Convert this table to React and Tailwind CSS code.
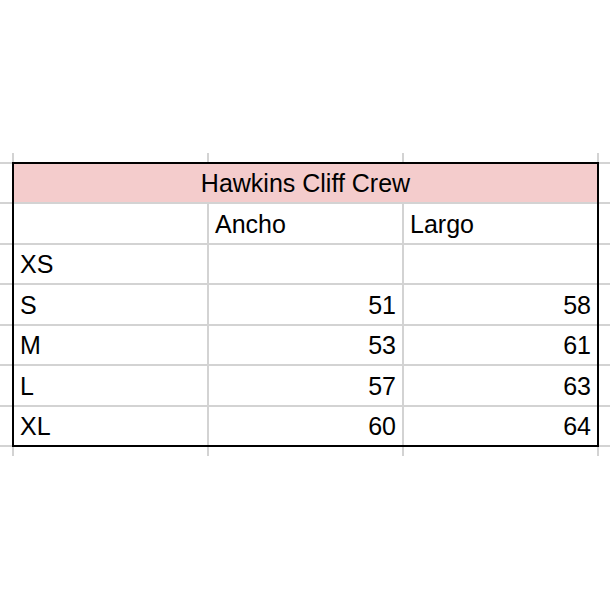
import React from "react";

const rows = [
  ["XS", "", ""],
  ["S", "51", "58"],
  ["M", "53", "61"],
  ["L", "57", "63"],
  ["XL", "60", "64"],
];

function StubRow() {
  return (
    <div className="flex h-[9px] pl-[12px]">
      <div className="w-[2px] bg-[#d3d3d3]" />
      <div className="w-[193px]" />
      <div className="w-[2px] bg-[#d3d3d3]" />
      <div className="w-[193px]" />
      <div className="w-[2px] bg-[#d3d3d3]" />
      <div className="w-[193px]" />
      <div className="w-[2px] bg-[#d3d3d3]" />
    </div>
  );
}

function StubCol({ w }) {
  return (
    <div
      className={`${w} h-[285px] border-y-2 border-[#d3d3d3] bg-[#d3d3d3] grid grid-rows-7 gap-[2px]`}
    >
      {Array.from({ length: 7 }).map((_, i) => (
        <div key={i} className="bg-white" />
      ))}
    </div>
  );
}

const cell = "bg-white flex items-end pb-[6px] leading-[26px] text-[25px] text-black";

export default function App() {
  return (
    <div
      className="w-[610px] h-[610px] bg-white pt-[153px]"
      style={{ fontFamily: '"Liberation Sans", Arial, sans-serif' }}
    >
      <StubRow />
      <div className="flex">
        <StubCol w="w-[12px]" />
        <div className="w-[587px] h-[285px] border-2 border-black bg-[#d3d3d3] grid grid-cols-3 grid-rows-7 gap-[2px]">
          <div className="col-span-3 bg-[#f4cccc] flex items-end justify-center pb-[6px] leading-[26px] text-[25px] text-black">
            Hawkins Cliff Crew
          </div>
          <div className={cell} />
          <div className={`${cell} pl-[6px]`}>Ancho</div>
          <div className={`${cell} pl-[6px]`}>Largo</div>
          {rows.map((r, i) => (
            <React.Fragment key={i}>
              <div className={`${cell} pl-[6px]`}>{r[0]}</div>
              <div className={`${cell} justify-end pr-[6px]`}>{r[1]}</div>
              <div className={`${cell} justify-end pr-[6px]`}>{r[2]}</div>
            </React.Fragment>
          ))}
        </div>
        <StubCol w="w-[11px]" />
      </div>
      <StubRow />
    </div>
  );
}
